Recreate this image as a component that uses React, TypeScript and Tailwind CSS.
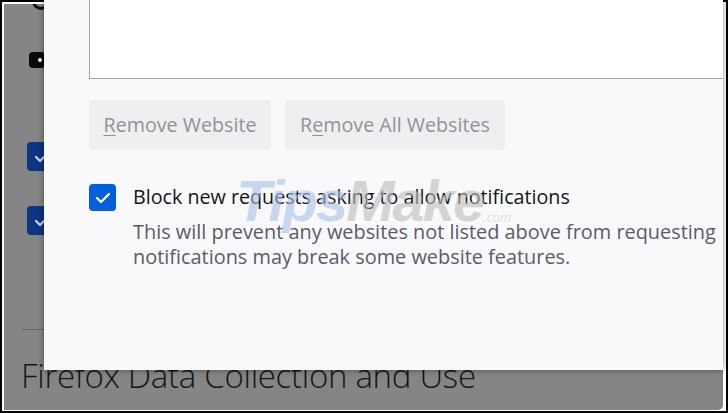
import React from "react";

const font = { fontFamily: '"Open Sans", "Noto Sans", sans-serif' };

function Check({ color }: { color: string }) {
  return (
    <svg width="16" height="12" viewBox="0 0 16 12" fill="none">
      <path d="M2 6l4 4 8-8" stroke={color} strokeWidth="2.3" strokeLinecap="round" strokeLinejoin="round" />
    </svg>
  );
}

function Backdrop() {
  return (
    <div className="relative h-full w-full overflow-hidden rounded-br-[5px] bg-[#858585]">
      {/* dimmed page behind the dialog */}
      <div className="absolute left-[28px] top-[-12px] h-[18px] w-[18px] rounded-full border-[3px] border-[#111]" />
      <div className="absolute left-[25px] top-[48px] flex h-[16px] w-[16px] items-center justify-center rounded-[4px] bg-[#0a0a0a]">
        <div className="ml-[6px] h-[4px] w-[4px] rounded-full bg-white" />
      </div>
      <div className="absolute left-[23px] top-[138px] flex h-[29px] w-[29px] items-center justify-center rounded-[4px] bg-[#0b3683]">
        <Check color="#c9d3e6" />
      </div>
      <div className="absolute left-[23px] top-[202px] flex h-[29px] w-[29px] items-center justify-center rounded-[4px] bg-[#0b3683]">
        <Check color="#c9d3e6" />
      </div>
      <div className="absolute left-[18px] top-[325px] h-px w-[30px] bg-[#666]" />
      <div
        className="absolute left-[17px] top-[355px] whitespace-nowrap text-[33px] font-light leading-none tracking-[-0.3px] text-[#161616]"
        style={font}
      >
        Firefox Data Collection and Use
      </div>
    </div>
  );
}

function Dialog() {
  return (
    <div
      className="absolute left-[40px] top-[-4px] flex h-[370px] w-[679px] flex-col bg-[#f9f9fb] pl-[45px] shadow-[0_0_6px_rgba(0,0,0,0.45)]"
      style={font}
    >
      <div className="h-[79px] shrink-0 border-b border-l border-[#a3a3a8] bg-white" />
      <div className="mt-[21px] flex gap-[14px]">
        <button className="h-[50px] w-[182px] rounded-[4px] bg-[#efeff1] text-[19.7px] text-[#929296]">
          <span className="underline underline-offset-[3px]">R</span>emove Website
        </button>
        <button className="h-[50px] w-[220px] rounded-[4px] bg-[#efeff1] text-[19.7px] text-[#929296]">
          R<span className="underline underline-offset-[3px]">e</span>move All Websites
        </button>
      </div>
      <div className="mt-[33px] flex items-start gap-[17px]">
        <div className="mt-[1px] flex h-[27px] w-[27px] shrink-0 items-center justify-center rounded-[4px] bg-[#0060df]">
          <Check color="white" />
        </div>
        <div className="flex flex-col">
          <div className="text-[19.7px] leading-[28px] text-[#15141a]">
            Block new requests asking to allow notifications
          </div>
          <div className="mt-[8px] whitespace-nowrap text-[19.9px] leading-[25px] text-[#5b5b66]">
            This will prevent any websites not listed above from requesting
            <br />
            notifications may break some website features.
          </div>
        </div>
      </div>
      {/* watermark */}
      <div className="pointer-events-none absolute left-[192px] top-[172px] flex items-end whitespace-nowrap italic opacity-60">
        <span className="text-[58px] font-bold leading-none tracking-[-2px] text-[#a6c3e6]" style={{ fontFamily: '"Liberation Sans", sans-serif' }}>
          Tips
        </span>
        <span className="text-[58px] font-bold leading-none tracking-[-2px] text-[#bdbdbd]" style={{ fontFamily: '"Liberation Sans", sans-serif' }}>
          Make
        </span>
        <span className="mb-[6px] text-[13px] leading-none text-[#d0d0d0]">.com</span>
      </div>
    </div>
  );
}

export default function App() {
  return (
    <div className="h-[413px] w-[728px] border-2 border-black bg-white p-[2px] pb-[1px]">
      <div className="relative h-full w-[719px]">
        <Backdrop />
        <Dialog />
      </div>
    </div>
  );
}
